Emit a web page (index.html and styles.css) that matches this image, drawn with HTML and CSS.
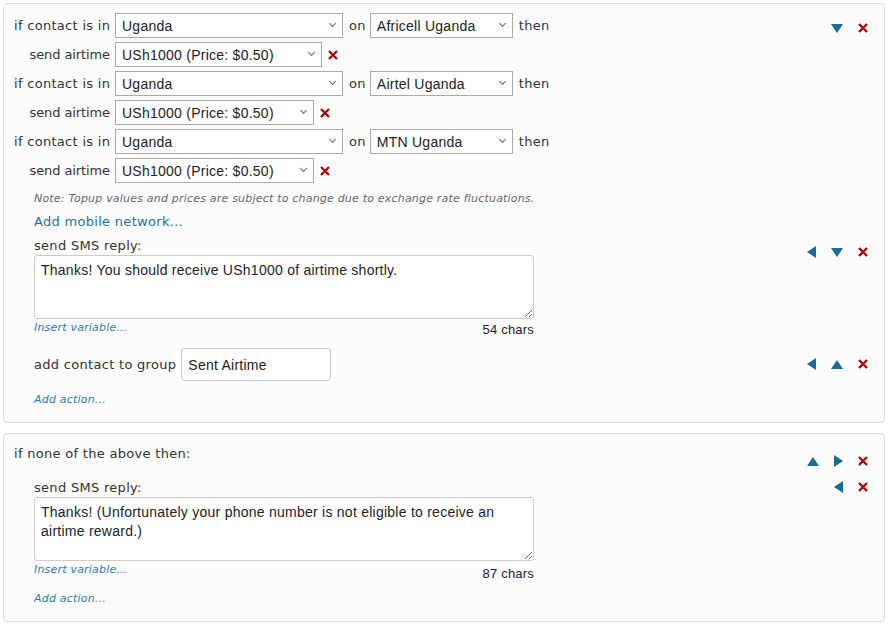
FILE: index.html
```html
<!DOCTYPE html>
<html lang="en">
<head>
    <meta charset="UTF-8">
    <title>Airtime rules</title>
    <link rel="stylesheet" href="styles.css">
</head>
<body>
    <div class="panel">
        <div class="rule-head">
            <div class="networks">
                <div class="row">
                    <span class="lbl">if contact is in</span>
                    <span class="sel w228"><select><option>Uganda</option></select></span>
                    <span class="word">on</span>
                    <span class="sel w144"><select><option>Africell Uganda</option></select></span>
                    <span class="word">then</span>
                </div>
                <div class="row">
                    <span class="lbl tight">send airtime</span>
                    <span class="sel w208"><select><option>USh1000 (Price: $0.50)</option></select></span>
                    <svg class="del" viewBox="0 0 10 10"><path d="M1 1L9 9M9 1L1 9"/></svg>
                </div>
                <div class="row">
                    <span class="lbl">if contact is in</span>
                    <span class="sel w228"><select><option>Uganda</option></select></span>
                    <span class="word">on</span>
                    <span class="sel w144"><select><option>Airtel Uganda</option></select></span>
                    <span class="word">then</span>
                </div>
                <div class="row">
                    <span class="lbl tight">send airtime</span>
                    <span class="sel w200"><select><option>USh1000 (Price: $0.50)</option></select></span>
                    <svg class="del" viewBox="0 0 10 10"><path d="M1 1L9 9M9 1L1 9"/></svg>
                </div>
                <div class="row">
                    <span class="lbl">if contact is in</span>
                    <span class="sel w228"><select><option>Uganda</option></select></span>
                    <span class="word">on</span>
                    <span class="sel w144"><select><option>MTN Uganda</option></select></span>
                    <span class="word">then</span>
                </div>
                <div class="row">
                    <span class="lbl tight">send airtime</span>
                    <span class="sel w200"><select><option>USh1000 (Price: $0.50)</option></select></span>
                    <svg class="del" viewBox="0 0 10 10"><path d="M1 1L9 9M9 1L1 9"/></svg>
                </div>
            </div>
            <div class="icons head-icons">
                <span class="tri down"></span>
                <svg class="del" viewBox="0 0 10 10"><path d="M1 1L9 9M9 1L1 9"/></svg>
            </div>
        </div>

        <div class="indent">
            <p class="note">Note: Topup values and prices are subject to change due to exchange rate fluctuations.</p>
            <a class="add-network" href="#">Add mobile network...</a>

            <div class="action sms-action">
                <div class="action-body">
                    <div class="action-lbl">send SMS reply:</div>
                    <textarea class="msg">Thanks! You should receive USh1000 of airtime shortly.</textarea>
                    <div class="msg-foot">
                        <a class="small-link" href="#">Insert variable...</a>
                        <span class="count">54 chars</span>
                    </div>
                </div>
                <div class="icons">
                    <span class="tri left"></span>
                    <span class="tri down"></span>
                    <svg class="del" viewBox="0 0 10 10"><path d="M1 1L9 9M9 1L1 9"/></svg>
                </div>
            </div>

            <div class="action group-action">
                <div class="action-body inline">
                    <span class="action-lbl">add contact to group</span>
                    <input class="group" type="text" value="Sent Airtime">
                </div>
                <div class="icons">
                    <span class="tri left"></span>
                    <span class="tri up"></span>
                    <svg class="del" viewBox="0 0 10 10"><path d="M1 1L9 9M9 1L1 9"/></svg>
                </div>
            </div>

            <a class="small-link add-action" href="#">Add action...</a>
        </div>
    </div>

    <div class="panel second">
        <div class="rule-head">
            <div class="none-lbl">if none of the above then:</div>
            <div class="icons head-icons2">
                <span class="tri up"></span>
                <span class="tri right"></span>
                <svg class="del" viewBox="0 0 10 10"><path d="M1 1L9 9M9 1L1 9"/></svg>
            </div>
        </div>
        <div class="indent">
            <div class="action sms-action2">
                <div class="action-body">
                    <div class="action-lbl">send SMS reply:</div>
                    <textarea class="msg">Thanks! (Unfortunately your phone number is not eligible to receive an airtime reward.)</textarea>
                    <div class="msg-foot">
                        <a class="small-link" href="#">Insert variable...</a>
                        <span class="count low">87 chars</span>
                    </div>
                </div>
                <div class="icons">
                    <span class="tri left"></span>
                    <svg class="del" viewBox="0 0 10 10"><path d="M1 1L9 9M9 1L1 9"/></svg>
                </div>
            </div>
            <a class="small-link add-action2" href="#">Add action...</a>
        </div>
    </div>
</body>
</html>
```

FILE: styles.css
```css
body {
    margin: 0;
    padding: 3px 5px 0 3px;
    background-color: #fff;
    font-family: "DejaVu Sans", Verdana, sans-serif;
    font-size: 13px;
    letter-spacing: 0.3px;
    color: #333;
}
a {
    text-decoration: none;
    color: #1f6fa6;
}
.panel {
    border: 1px solid #dcdcdc;
    border-radius: 4px;
    background-color: #fcfcfc;
    padding: 9px 0 15px 10px;
}
.panel.second {
    margin-top: 10px;
    padding-top: 12px;
    padding-bottom: 15px;
}
.rule-head {
    display: flex;
    align-items: flex-start;
}
.networks {
    display: flex;
    flex-direction: column;
    gap: 4px;
}
.row {
    display: flex;
    align-items: center;
    height: 25px;
}
.lbl {
    width: 96px;
    text-align: right;
    white-space: nowrap;
    margin-right: 5px;
}
.lbl.tight {
    letter-spacing: -0.1px;
}
.word {
    margin: 0 4px 0 6px;
}
.sel {
    position: relative;
    display: inline-block;
    height: 25px;
}
.sel select {
    appearance: none;
    -webkit-appearance: none;
    width: 100%;
    height: 25px;
    margin: 0;
    border: 1px solid #a9a9a9;
    border-radius: 0;
    background-color: #fff;
    padding: 0 20px 0 6px;
    font-family: "Liberation Sans", Arial, sans-serif;
    font-size: 14px;
    letter-spacing: 0.25px;
    color: #222;
}
.sel::after {
    content: "";
    position: absolute;
    right: 8px;
    top: 8px;
    width: 4px;
    height: 4px;
    border-right: 1.5px solid #666;
    border-bottom: 1.5px solid #666;
    transform: rotate(45deg);
    pointer-events: none;
}
.w228 { width: 228px; }
.w144 { width: 143px; }
.w208 { width: 207px; }
.w200 { width: 199px; }
.del {
    display: inline-block;
    width: 10px;
    height: 10px;
    flex: none;
}
.del path {
    stroke: #b00000;
    stroke-width: 2.3;
    fill: none;
}
.row .del {
    margin-left: 6px;
}
.indent {
    padding-left: 20px;
}
.note {
    margin: 9px 0 0;
    font-size: 11px;
    line-height: 14px;
    font-style: italic;
    color: #666;
    white-space: nowrap;
    letter-spacing: 0.2px;
}
.add-network {
    display: block;
    margin-top: 8px;
    line-height: 16px;
}
.action {
    display: flex;
    align-items: flex-start;
}
.action-body {
    width: 500px;
}
.action-body.inline {
    display: flex;
    align-items: center;
}
.action-lbl {
    display: block;
    line-height: 16px;
}
.inline .action-lbl {
    margin-right: 5px;
}
.sms-action {
    margin-top: 8px;
}
.msg {
    display: block;
    box-sizing: border-box;
    width: 500px;
    height: 64px;
    margin-top: 1px;
    padding: 5px 6px;
    border: 1px solid #ccc;
    border-radius: 3px;
    background-color: #fff;
    font-family: "Liberation Sans", Arial, sans-serif;
    font-size: 14px;
    line-height: 19px;
    letter-spacing: 0.25px;
    color: #222;
    resize: vertical;
}
.msg-foot {
    display: flex;
    justify-content: space-between;
    align-items: flex-start;
    height: 18px;
    margin-top: 2px;
}
.small-link {
    font-size: 11px;
    font-style: italic;
    line-height: 14px;
    letter-spacing: 0.2px;
    color: #2b7bb5;
}
.count {
    font-family: "Liberation Sans", Arial, sans-serif;
    font-size: 13px;
    line-height: 16px;
    letter-spacing: 0.2px;
    color: #222;
    margin-top: 1px;
}
.count.low {
    margin-top: 3px;
}
.group-action {
    margin-top: 9px;
}
.group {
    box-sizing: border-box;
    width: 150px;
    height: 33px;
    margin: 0;
    padding: 0 6px;
    border: 1px solid #ccc;
    border-radius: 3px;
    background-color: #fff;
    font-family: "Liberation Sans", Arial, sans-serif;
    font-size: 14px;
    letter-spacing: 0.25px;
    color: #222;
}
.add-action {
    display: block;
    margin-top: 12px;
}
.icons {
    display: flex;
    align-items: center;
    justify-content: flex-end;
    gap: 15px;
    margin-left: auto;
    padding-right: 16px;
}
.icons .del {
    margin: 0;
}
.sms-action .icons {
    margin-top: 8px;
}
.group-action .icons {
    margin-top: 10px;
}
.head-icons {
    margin-top: 10px;
}
.tri {
    display: inline-block;
    width: 0;
    height: 0;
    border-style: solid;
}
.tri.down {
    border-width: 9px 6px 0 6px;
    border-color: #146c9c transparent transparent transparent;
}
.tri.up {
    border-width: 0 6px 9px 6px;
    border-color: transparent transparent #146c9c transparent;
}
.tri.left {
    border-width: 6px 9px 6px 0;
    border-color: transparent #146c9c transparent transparent;
}
.tri.right {
    border-width: 6px 0 6px 9px;
    border-color: transparent transparent transparent #146c9c;
}
.none-lbl {
    line-height: 16px;
}
.head-icons2 {
    margin-top: 9px;
}
.sms-action2 {
    margin-top: 13px;
}
.sms-action2 .icons {
    margin-top: 1px;
}
.add-action2 {
    display: block;
    margin-top: 11px;
}
```
